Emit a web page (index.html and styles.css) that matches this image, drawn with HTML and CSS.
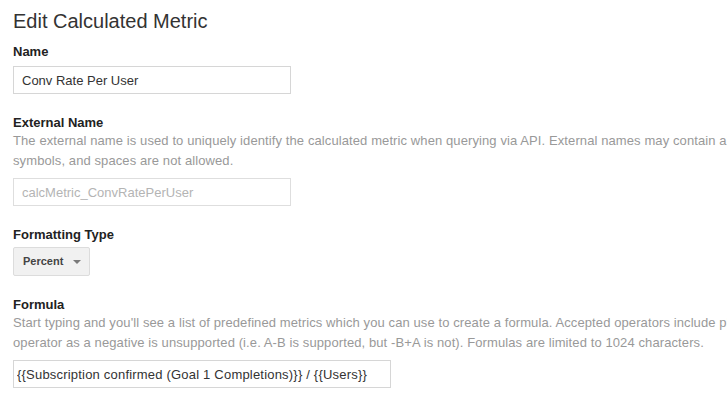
FILE: index.html
```html
<!DOCTYPE html>
<html lang="en">
<head>
<meta charset="utf-8">
<title>Edit Calculated Metric</title>
<link rel="stylesheet" href="styles.css">
</head>
<body>
<div class="page">
  <h1 class="title">Edit Calculated Metric</h1>

  <section class="field">
    <label class="label" for="name">Name</label>
    <input class="text-input narrow" id="name" type="text" value="Conv Rate Per User">
  </section>

  <section class="field">
    <label class="label" for="ext">External Name</label>
    <div class="desc">
      <span class="line">The external name is used to uniquely identify the calculated metric when querying via API. External names may contain alphanumeric characters and underscores. Dashes, other</span>
      <span class="line">symbols, and spaces are not allowed.</span>
    </div>
    <input class="text-input narrow disabled" id="ext" type="text" value="calcMetric_ConvRatePerUser" disabled>
  </section>

  <section class="field">
    <div class="label">Formatting Type</div>
    <button class="dropdown" type="button">
      <span class="dropdown-text">Percent</span>
      <span class="caret"></span>
    </button>
  </section>

  <section class="field">
    <label class="label" for="formula">Formula</label>
    <div class="desc">
      <span class="line">Start typing and you'll see a list of predefined metrics which you can use to create a formula. Accepted operators include plus, minus, multiply, divide and parentheses. Using the minus</span>
      <span class="line">operator as a negative is unsupported (i.e. A-B is supported, but -B+A is not). Formulas are limited to 1024 characters.</span>
    </div>
    <input class="text-input wide" id="formula" type="text" value="{{Subscription confirmed (Goal 1 Completions)}} / {{Users}}">
  </section>
</div>
</body>
</html>
```

FILE: styles.css
```css
html, body {
  margin: 0;
  padding: 0;
  background: #ffffff;
  overflow: hidden;
}

body {
  font-family: "Liberation Sans", Arial, sans-serif;
  font-size: 13px;
  color: #333333;
}

.page {
  display: flex;
  flex-direction: column;
  padding: 9px 0 0 13px;
  gap: 21px;
}

.title {
  margin: 0 0 -10px 0;
  font-size: 20px;
  line-height: 24px;
  font-weight: normal;
  color: #333333;
}

.field {
  display: flex;
  flex-direction: column;
  align-items: flex-start;
}

.label {
  display: block;
  font-size: 13px;
  line-height: 16px;
  font-weight: bold;
  color: #222222;
  margin-bottom: 6px;
}

.desc {
  display: flex;
  flex-direction: column;
  color: #999999;
  font-size: 13px;
  line-height: 20px;
  letter-spacing: 0.1px;
  margin-top: -6px;
  margin-bottom: 7px;
  white-space: nowrap;
}

.line {
  display: block;
}

.text-input {
  box-sizing: border-box;
  height: 28px;
  margin: 0;
  padding: 0 8px;
  border: 1px solid #d6d6d6;
  border-radius: 0;
  background: #ffffff;
  font-family: "Liberation Sans", Arial, sans-serif;
  font-size: 13px;
  color: #333333;
  outline: none;
}

.narrow {
  width: 278px;
}

.wide {
  width: 378px;
  padding-left: 3px;
  letter-spacing: 0.2px;
}

.disabled {
  color: #b4b4b4;
  border-color: #dedede;
  background: #ffffff;
  -webkit-text-fill-color: #b4b4b4;
}

.dropdown {
  box-sizing: border-box;
  display: flex;
  align-items: center;
  width: 77px;
  height: 29px;
  margin: -2px 0 0 0;
  padding: 0 0 0 9px;
  border: 1px solid #dcdcdc;
  border-radius: 2px;
  background: #f1f1f1;
  font-family: "Liberation Sans", Arial, sans-serif;
  font-size: 11px;
  font-weight: bold;
  color: #444444;
}

.dropdown-text {
  display: block;
  margin-top: -2px;
}

.caret {
  display: block;
  width: 0;
  height: 0;
  margin-left: 10px;
  margin-top: 1px;
  border-left: 4px solid transparent;
  border-right: 4px solid transparent;
  border-top: 4px solid #7a7a7a;
}
```
